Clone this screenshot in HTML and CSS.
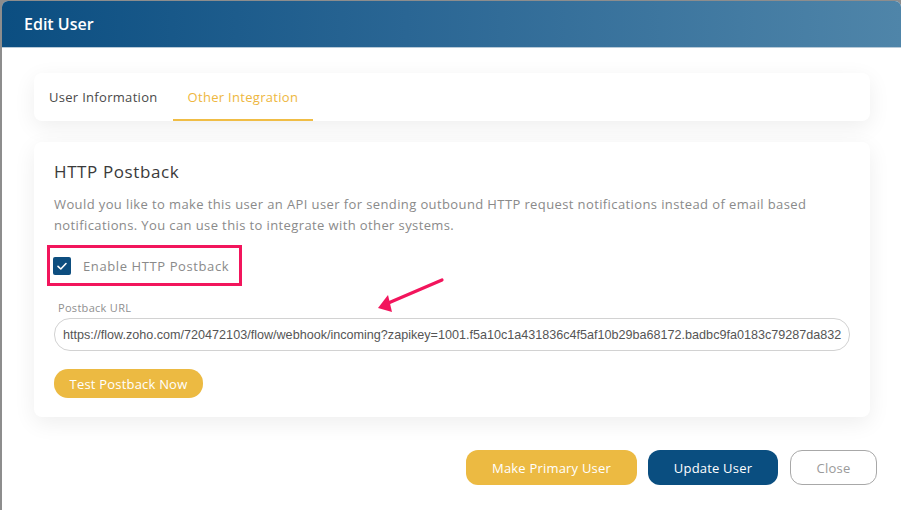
FILE: index.html
```html
<!DOCTYPE html>
<html>
<head>
<meta charset="utf-8">
<link rel="stylesheet" href="styles.css">
</head>
<body>
<div class="modal">
  <div class="modal-header">Edit User</div>
  <div class="modal-body">
    <div class="card tabs">
      <div class="tab">User Information</div>
      <div class="tab active">Other Integration</div>
    </div>
    <div class="card section">
      <h3 class="section-title">HTTP Postback</h3>
      <p class="section-text">Would you like to make this user an API user for sending outbound HTTP request notifications instead of email based notifications. You can use this to integrate with other systems.</p>
      <div class="highlight">
        <span class="checkbox">
          <svg width="18" height="18" viewBox="0 0 18 18"><path d="M5 9.3 L7.8 12 L13 6.5" fill="none" stroke="#fff" stroke-width="1.6" stroke-linecap="round" stroke-linejoin="round"/></svg>
        </span>
        <span class="check-label">Enable HTTP Postback</span>
      </div>
      <label class="field-label">Postback URL</label>
      <div class="input">https://flow.zoho.com/720472103/flow/webhook/incoming?zapikey=1001.f5a10c1a431836c4f5af10b29ba68172.badbc9fa0183c79287da832</div>
      <button class="btn btn-yellow btn-test">Test Postback Now</button>
      <svg class="arrow" width="116" height="46" viewBox="0 0 116 46">
        <line x1="108" y1="8" x2="52" y2="32" stroke="#f2155c" stroke-width="3.2" stroke-linecap="round"/>
        <polygon points="44,36 54,23 58,40" fill="#f2155c"/>
      </svg>
    </div>
  </div>
  <div class="modal-footer">
    <button class="btn btn-yellow btn-primary-user">Make Primary User</button>
    <button class="btn btn-blue btn-update">Update User</button>
    <button class="btn btn-outline btn-close">Close</button>
  </div>
</div>
</body>
</html>
```
FILE: styles.css
```css
html, body {
  margin: 0;
  height: 100%;
}
body {
  background: #8d8d8d;
  padding: 1px 0 0 2px;
  box-sizing: border-box;
  font-family: "Open Sans", "Noto Sans", sans-serif;
  overflow: hidden;
}
.modal {
  background: #fff;
  border-radius: 6px 6px 0 0;
  height: 100%;
  overflow: hidden;
}
.modal-header {
  height: 47px;
  box-sizing: border-box;
  padding-left: 22px;
  display: flex;
  align-items: center;
  color: #fff;
  font-size: 16px;
  font-weight: 600;
  background: linear-gradient(90deg, #0b4e81 0%, #2a6694 45%, #4f85a9 100%);
  border-bottom: 1px solid #b8cad8;
}
.modal-body {
  padding: 25px 31px 0 32px;
}
.card {
  background: #fff;
  border-radius: 8px;
  box-shadow: 0 6px 22px rgba(0, 0, 0, 0.07);
}
.tabs {
  display: flex;
  height: 48px;
}
.tab {
  padding: 0 15px;
  display: flex;
  align-items: center;
  font-size: 13px;
  color: #4a4a4a;
  letter-spacing: 0.3px;
  box-sizing: border-box;
  border-bottom: 2px solid transparent;
  padding-top: 2px;
}
.tab.active {
  color: #eeb740;
  border-bottom-color: #f0bd45;
}
.section {
  margin-top: 21px;
  padding: 20px 20px 19px;
  position: relative;
}
.section-title {
  margin: 0;
  font-size: 17px;
  line-height: 20px;
  font-weight: 500;
  color: #3a3a3a;
  letter-spacing: 0.6px;
}
.section-text {
  margin: 12px 0 0;
  font-size: 13px;
  line-height: 21px;
  color: #8a8a8a;
  letter-spacing: 0.39px;
}
.highlight {
  margin: 9px 0 0 -7px;
  width: 195px;
  height: 41px;
  box-sizing: border-box;
  border: 3px solid #f2155c;
  display: flex;
  align-items: center;
  padding-left: 3px;
}
.checkbox {
  width: 18px;
  height: 18px;
  background: #0d4e7f;
  border-radius: 2px;
  display: flex;
}
.check-label {
  margin-left: 12px;
  font-size: 13px;
  color: #8a8a8a;
  letter-spacing: 0.6px;
}
.field-label {
  display: block;
  margin: 15px 0 0 4px;
  font-size: 11px;
  line-height: 14px;
  color: #8f8f8f;
  letter-spacing: 0.3px;
}
.input {
  margin-top: 3px;
  height: 33px;
  box-sizing: border-box;
  border: 1px solid #d2d2d2;
  border-radius: 16px;
  padding: 0 8px;
  display: flex;
  align-items: center;
  font-family: "Liberation Sans", Arial, sans-serif;
  font-size: 12.6px;
  color: #555;
  white-space: nowrap;
  overflow: hidden;
}
.btn {
  border: none;
  font-family: "Open Sans", "Noto Sans", sans-serif;
  font-size: 13px;
  color: #fff;
  cursor: pointer;
  padding: 0;
  letter-spacing: 0.2px;
}
.btn-yellow {
  background: #ecba42;
}
.btn-test {
  display: block;
  margin-top: 18px;
  width: 149px;
  height: 29px;
  border-radius: 14px;
}
.arrow {
  position: absolute;
  left: 300px;
  top: 130px;
}
.modal-footer {
  display: flex;
  justify-content: flex-end;
  gap: 11px;
  padding: 33px 24px 0 0;
}
.modal-footer .btn {
  height: 35px;
  border-radius: 12px;
}
.btn-primary-user {
  width: 171px;
}
.btn-blue {
  background: #0a4e80;
}
.btn-update {
  width: 130px;
}
.btn-outline {
  background: #fff;
  border: 1px solid #a8a8a8;
  color: #9a9a9a;
}
.btn-close {
  width: 87px;
  margin-left: 1px;
}
```
